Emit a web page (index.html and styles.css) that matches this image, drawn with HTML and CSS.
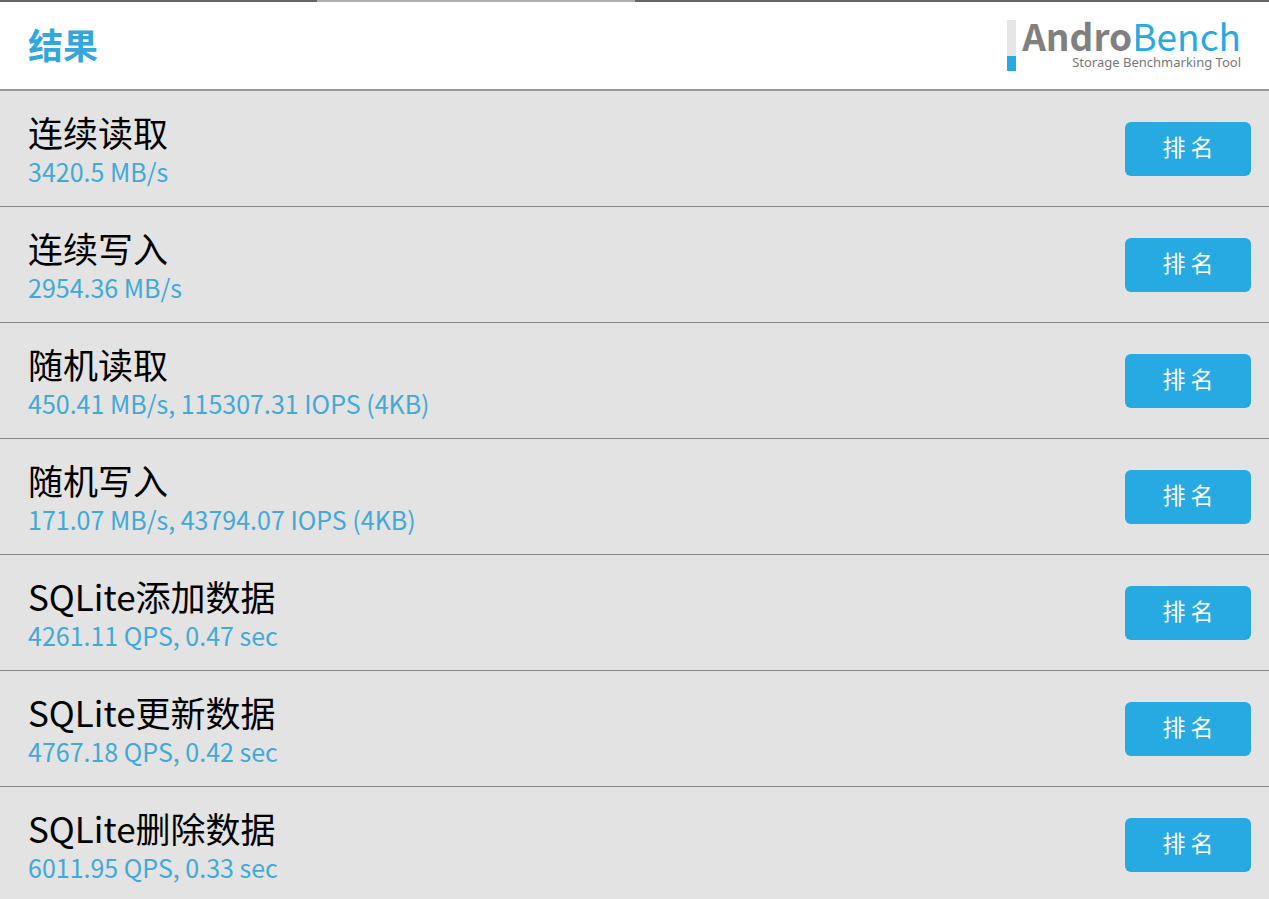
FILE: index.html
```
<!DOCTYPE html>
<html lang="zh-CN">
<head>
  <meta charset="UTF-8" />
  <meta name="viewport" content="width=device-width, initial-scale=1.0"/>
  <title>AndroBench</title>
  <link rel="stylesheet" href="styles.css">
</head>
<body>
  <div class="tabs">
    <span></span>
    <span class="active"></span>
    <span></span>
    <span></span>
  </div>

  <header class="header">
    <h1>结果</h1>
    <div class="logo">
      <div class="logo-bar"></div>
      <div class="logo-text">
        <div class="logo-name"><b>Andro</b>Bench</div>
        <div class="logo-tagline">Storage Benchmarking Tool</div>
      </div>
    </div>
  </header>

  <ul class="results">
    <li>
      <div class="result">
        <h2>连续读取</h2>
        <p>3420.5 MB/s</p>
      </div>
      <button type="button">排 名</button>
    </li>
    <li>
      <div class="result">
        <h2>连续写入</h2>
        <p>2954.36 MB/s</p>
      </div>
      <button type="button">排 名</button>
    </li>
    <li>
      <div class="result">
        <h2>随机读取</h2>
        <p>450.41 MB/s, 115307.31 IOPS (4KB)</p>
      </div>
      <button type="button">排 名</button>
    </li>
    <li>
      <div class="result">
        <h2>随机写入</h2>
        <p>171.07 MB/s, 43794.07 IOPS (4KB)</p>
      </div>
      <button type="button">排 名</button>
    </li>
    <li>
      <div class="result">
        <h2>SQLite添加数据</h2>
        <p>4261.11 QPS, 0.47 sec</p>
      </div>
      <button type="button">排 名</button>
    </li>
    <li>
      <div class="result">
        <h2>SQLite更新数据</h2>
        <p>4767.18 QPS, 0.42 sec</p>
      </div>
      <button type="button">排 名</button>
    </li>
    <li>
      <div class="result">
        <h2>SQLite删除数据</h2>
        <p>6011.95 QPS, 0.33 sec</p>
      </div>
      <button type="button">排 名</button>
    </li>
  </ul>
</body>
</html>
```
FILE: styles.css
```
* {
  box-sizing: border-box;
}

body {
  display: flex;
  flex-direction: column;
  height: 100vh;
  margin: 0;
  overflow: hidden;
  background: #e3e3e3;
  font-family: "Noto Sans CJK SC", sans-serif;
}

h1, h2, p, ul {
  margin: 0;
  padding: 0;
}

/* tab strip */
.tabs {
  display: flex;
  flex: none;
  height: 2px;
}

.tabs span {
  flex: 1;
  background: #666;
}

.tabs .active {
  background: #b0b0b0;
}

.header {
  display: flex;
  flex: none;
  justify-content: space-between;
  padding: 18px 28px;
  border-bottom: 2px solid #999;
  background: white;
}

h1 {
  color: #33a7dc;
  font-size: 35px;
  line-height: 47px;
}

/* logo */
.logo {
  display: flex;
  gap: 6px;
}

.logo-bar {
  width: 9px;
  background: linear-gradient(#e6e6e6 70%, #27a9e1 70%);
}

.logo-text {
  text-align: right;
}

.logo-name {
  color: #27a9e1;
  font-size: 37px;
  line-height: 31px;
}

.logo-name b {
  color: #808080;
}

.logo-tagline {
  padding-top: 2px;
  color: #777;
  font-family: "Noto Sans", sans-serif;
  font-size: 13px;
  line-height: 18px;
}

/* result rows */
.results {
  flex: 1;
  min-height: 0;
  list-style: none;
}

.results li {
  display: flex;
  justify-content: space-between;
  align-items: center;
  height: 116px;
  padding: 0 18px 0 28px;
  border-bottom: 1px solid #858585;
}

.result {
  padding-top: 2px;
}

.result h2 {
  color: #000;
  font-size: 35px;
  font-weight: 400;
  line-height: 42px;
}

.result p {
  color: #41a9d6;
  font-size: 25px;
  line-height: 36px;
}

.results button {
  width: 126px;
  height: 54px;
  padding: 0 0 6px;
  border: none;
  border-radius: 6px;
  background: #27a9e1;
  color: white;
  font-family: inherit;
  font-size: 23px;
  cursor: pointer;
}
```
